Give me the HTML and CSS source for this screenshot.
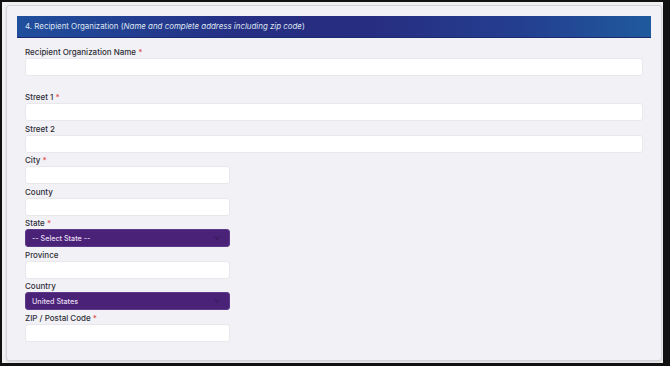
FILE: index.html
```html
<!DOCTYPE html>
<html lang="en">
<head>
  <meta charset="UTF-8">
  <title>Recipient Organization</title>
  <link rel="stylesheet" href="styles.css">
</head>
<body>
  <div class="frame">
    <div class="card">
      <div class="card-head">4. Recipient Organization (<em>Name and complete address including zip code</em>)</div>
      <form class="card-body">
        <div class="field first">
          <label>Recipient Organization Name <span class="req">*</span></label>
          <input type="text" class="full">
        </div>
        <div class="field">
          <label>Street 1 <span class="req">*</span></label>
          <input type="text" class="full">
        </div>
        <div class="field">
          <label>Street 2</label>
          <input type="text" class="full">
        </div>
        <div class="field">
          <label>City <span class="req">*</span></label>
          <input type="text" class="short">
        </div>
        <div class="field">
          <label>County</label>
          <input type="text" class="short">
        </div>
        <div class="field">
          <label>State <span class="req">*</span></label>
          <div class="select short"><span>-- Select State --</span><i class="chev"></i></div>
        </div>
        <div class="field">
          <label>Province</label>
          <input type="text" class="short">
        </div>
        <div class="field">
          <label>Country</label>
          <div class="select short"><span>United States</span><i class="chev"></i></div>
        </div>
        <div class="field">
          <label>ZIP / Postal Code <span class="req">*</span></label>
          <input type="text" class="short">
        </div>
      </form>
    </div>
  </div>
</body>
</html>
```

FILE: styles.css
```css
* { margin:0; padding:0; box-sizing:border-box }
body {
  width:670px; height:366px; overflow:hidden;
  background:#111;
  font-family:'Inter','Liberation Sans',sans-serif;
}
.frame {
  height:366px;
  border-style:solid; border-color:#111;
  border-width:2px 7px 3px 2px;
  background:#f0f0f3;
  padding:3px 1px 0 4px;
}
.card {
  height:356px;
  background:#f2f1f6;
  border:1px solid #d3d3d8;
  border-radius:3px;
  box-shadow:0 1px 2px rgba(0,0,0,0.12);
  padding:10px 10px 0 10px;
}
.card-head {
  height:21px; line-height:21px;
  padding-left:8px;
  font-size:7.9px; color:#dfe5f2;
  background:linear-gradient(90deg,#1f4f9d 0%,#262f84 35%,#272d80 55%,#243f90 80%,#1f5a9d 100%);
  box-shadow:0 1px 0 #1a2a70;
}
.card-head em { font-style:italic; }
.card-body { padding:9px 8px 0 8px; }
.field { margin-bottom:1.5px; }
.field.first { margin-bottom:15px; }
label {
  display:block; height:12px; line-height:12px;
  font-size:8px; font-weight:500; color:#2f2f36;
}
.req { color:#e04848; }
input[type=text], .select {
  display:block; height:18px;
  border:1px solid #e8e8ec; border-radius:3px;
  background:#fff;
}
.full { width:618px; }
.short { width:205px; }
.select {
  display:flex; align-items:center; justify-content:space-between;
  background:#4a2278; border-color:#5b3a8a;
  padding:0 10px 0 6px;
  font-size:7.2px; font-weight:500; color:#e6def0;
}
.chev {
  width:4px; height:4px;
  border-right:1px solid #3a1d60; border-bottom:1px solid #3a1d60;
  transform:rotate(45deg); margin-top:-2px;
}
```
